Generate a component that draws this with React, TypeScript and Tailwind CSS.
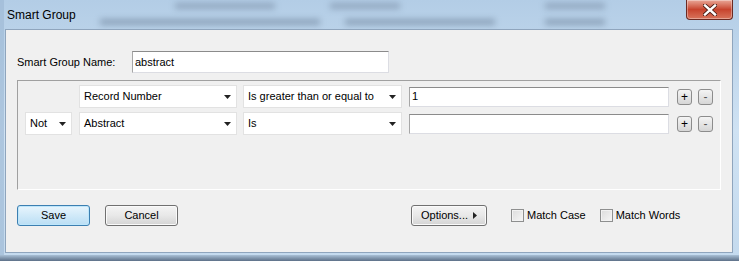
import type { ReactNode } from "react";

const font = { fontFamily: '"Liberation Sans", Arial, sans-serif' };

function Dropdown({ label, width }: { label: string; width: string }) {
  return (
    <div
      className={`${width} h-[23px] bg-white border border-[#e2e2e2] flex items-center justify-between pl-[4px] pr-[5px] text-[11px] text-black`}
    >
      <span>{label}</span>
      <svg width="7" height="4" viewBox="0 0 7 4">
        <path d="M0 0 H7 L3.5 4 Z" fill="#222" />
      </svg>
    </div>
  );
}

function TextBox({ value, width, height }: { value: string; width: string; height: string }) {
  return (
    <div
      className={`${width} ${height} bg-white border border-[#dcdde3] border-t-[#8b8b8b] border-l-[#a7a7a7] flex items-center pl-[2px] text-[11px] text-black`}
    >
      {value}
    </div>
  );
}

function SmallBtn({ children, faded }: { children: ReactNode; faded?: boolean }) {
  return (
    <div
      className={`w-[15px] h-[16px] rounded-[3px] border border-[#8c8c8c] bg-gradient-to-b from-[#f4f4f4] to-[#d6d6d6] flex items-center justify-center text-[12px] leading-none ${faded ? "text-[#555]" : "text-black"}`}
    >
      {children}
    </div>
  );
}

function Button({ children, width, primary }: { children: ReactNode; width: string; primary?: boolean }) {
  return (
    <div
      className={`${width} h-[21px] rounded-[3px] border flex items-center justify-center text-[11px] text-black ${
        primary
          ? "border-[#3c7fb1] bg-gradient-to-b from-[#e8f5fd] to-[#b9def4] shadow-[inset_0_0_0_1px_#bde6fb]"
          : "border-[#707070] bg-gradient-to-b from-[#f4f4f4] via-[#e8e8e8] to-[#d4d4d4] shadow-[inset_0_0_0_1px_#fafafa]"
      }`}
    >
      {children}
    </div>
  );
}

function Check({ label }: { label: string }) {
  return (
    <div className="flex items-center gap-[3px] text-[11px] text-black">
      <div className="w-[13px] h-[13px] border border-[#8e8f8f] bg-gradient-to-br from-[#dcdcdc] to-[#f6f6f6] shadow-[inset_0_0_0_1px_#f2f2f2]" />
      <span>{label}</span>
    </div>
  );
}

export default function App() {
  return (
    <div
      className="relative w-[739px] h-[261px] overflow-hidden bg-gradient-to-b from-[#b3cde6] via-[#cfe2f3] to-[#c4daee] flex flex-col"
      style={font}
    >
      {/* blurred content behind the glass */}
      <div className="absolute left-[175px] top-[3px] w-[100px] h-[6px] bg-[#6d8098] blur-[3px] opacity-50" />
      <div className="absolute left-[330px] top-[3px] w-[70px] h-[6px] bg-[#6d8098] blur-[3px] opacity-50" />
      <div className="absolute left-[545px] top-[3px] w-[60px] h-[6px] bg-[#6d8098] blur-[3px] opacity-50" />
      <div className="absolute left-[100px] top-[19px] w-[220px] h-[6px] bg-[#5f738b] blur-[3px] opacity-50" />
      <div className="absolute left-[345px] top-[19px] w-[150px] h-[6px] bg-[#5f738b] blur-[3px] opacity-50" />
      <div className="absolute left-[545px] top-[19px] w-[60px] h-[6px] bg-[#5f738b] blur-[3px] opacity-50" />
      <div className="absolute left-0 top-0 w-[4px] h-full bg-[#9fbbd6] opacity-70" />
      <div className="absolute left-0 bottom-0 w-full h-[6px] bg-gradient-to-b from-[#a9c0d6] to-[#5d7088]" />

      {/* close button */}
      <div className="absolute right-[6px] top-0 w-[47px] h-[20px] rounded-b-[4px] border border-t-0 border-[#6b2a22] bg-gradient-to-b from-[#e8a697] via-[#c7432d] to-[#d8735b] flex items-center justify-center shadow-[inset_0_0_0_1px_rgba(255,255,255,0.35)]">
        <svg width="14" height="12" viewBox="0 0 14 12">
          <path d="M2 1.5 L12 10.5 M12 1.5 L2 10.5" stroke="#4a1d16" strokeWidth="4.2" strokeLinecap="square" />
          <path d="M2 1.5 L12 10.5 M12 1.5 L2 10.5" stroke="#fff" strokeWidth="2.4" strokeLinecap="square" />
        </svg>
      </div>

      {/* title bar */}
      <div className="relative h-[29px] shrink-0 pl-[7px] flex items-center text-[12px] text-black">
        Smart Group
      </div>

      {/* client area */}
      <div className="relative ml-[5px] mr-[6px] h-[224px] border border-[#8fa5bd] bg-[#f0f0f0] flex flex-col px-[11px]">
        <div className="flex items-center mt-[21px] h-[22px]">
          <span className="w-[115px] text-[11px] text-black">Smart Group Name:</span>
          <TextBox value="abstract" width="w-[257px]" height="h-[22px]" />
        </div>

        <div className="mt-[7px] h-[110px] border border-[#a0a0a0] border-r-white border-b-white pt-[4px] pl-[7px] flex flex-col gap-[4px]">
          <div className="flex items-center">
            <div className="w-[47px]" />
            <div className="ml-[7px]"><Dropdown label="Record Number" width="w-[158px]" /></div>
            <div className="ml-[6px]"><Dropdown label="Is greater than or equal to" width="w-[159px]" /></div>
            <div className="ml-[7px]"><TextBox value="1" width="w-[260px]" height="h-[20px]" /></div>
            <div className="ml-[8px]"><SmallBtn>+</SmallBtn></div>
            <div className="ml-[6px]"><SmallBtn faded>-</SmallBtn></div>
          </div>
          <div className="flex items-center">
            <Dropdown label="Not" width="w-[47px]" />
            <div className="ml-[7px]"><Dropdown label="Abstract" width="w-[158px]" /></div>
            <div className="ml-[6px]"><Dropdown label="Is" width="w-[159px]" /></div>
            <div className="ml-[7px]"><TextBox value="" width="w-[260px]" height="h-[20px]" /></div>
            <div className="ml-[8px]"><SmallBtn>+</SmallBtn></div>
            <div className="ml-[6px]"><SmallBtn faded>-</SmallBtn></div>
          </div>
        </div>

        <div className="mt-[15px] flex items-center">
          <Button width="w-[73px]" primary>Save</Button>
          <div className="ml-[15px]"><Button width="w-[73px]">Cancel</Button></div>
          <div className="ml-[233px]">
            <Button width="w-[76px]">
              <span>Options...</span>
              <svg className="ml-[5px]" width="4" height="7" viewBox="0 0 4 7">
                <path d="M0 0 L4 3.5 L0 7 Z" fill="#222" />
              </svg>
            </Button>
          </div>
          <div className="ml-[24px]"><Check label="Match Case" /></div>
          <div className="ml-[14px]"><Check label="Match Words" /></div>
        </div>
      </div>
    </div>
  );
}
